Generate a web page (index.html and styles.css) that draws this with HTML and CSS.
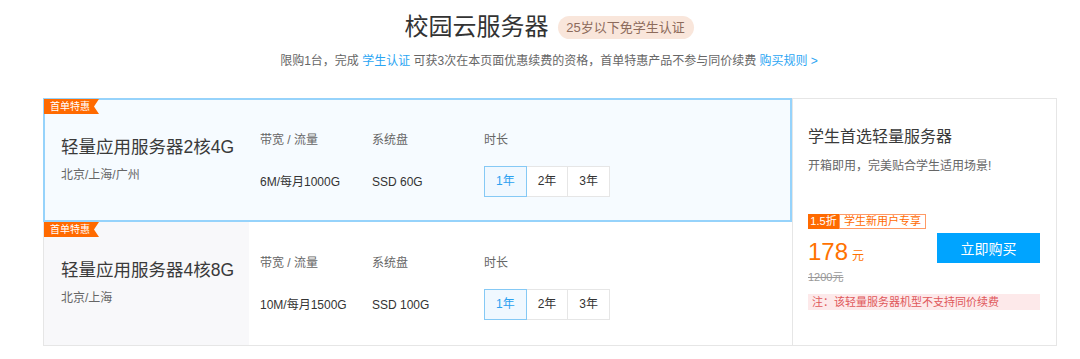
FILE: index.html
```html
<!DOCTYPE html>
<html lang="zh-CN">
<head>
    <meta charset="UTF-8">
    <title>校园云服务器</title>
    <link rel="stylesheet" href="styles.css">
</head>
<body>
    <div class="head">
        <div class="head-title">
            <h1>校园云服务器</h1>
            <span class="age-badge">25岁以下免学生认证</span>
        </div>
        <p class="head-desc">限购1台，完成 <a href="#">学生认证</a> 可获3次在本页面优惠续费的资格，首单特惠产品不参与同价续费 <a href="#">购买规则 &gt;</a></p>
    </div>

    <div class="plans">
        <div class="plan-list">
            <!-- 套餐 1 -->
            <div class="plan active">
                <span class="plan-tag">首单特惠</span>
                <div class="plan-side">
                    <div class="plan-name">轻量应用服务器2核4G</div>
                    <div class="plan-region">北京/上海/广州</div>
                </div>
                <div class="spec">
                    <div class="spec-label">带宽 / 流量</div>
                    <div class="spec-value">6M/每月1000G</div>
                </div>
                <div class="spec">
                    <div class="spec-label">系统盘</div>
                    <div class="spec-value">SSD 60G</div>
                </div>
                <div class="spec">
                    <div class="spec-label">时长</div>
                    <div class="years">
                        <span class="year on">1年</span><span class="year">2年</span><span class="year">3年</span>
                    </div>
                </div>
            </div>
            <!-- 套餐 2 -->
            <div class="plan">
                <span class="plan-tag">首单特惠</span>
                <div class="plan-side">
                    <div class="plan-name">轻量应用服务器4核8G</div>
                    <div class="plan-region">北京/上海</div>
                </div>
                <div class="spec">
                    <div class="spec-label">带宽 / 流量</div>
                    <div class="spec-value">10M/每月1500G</div>
                </div>
                <div class="spec">
                    <div class="spec-label">系统盘</div>
                    <div class="spec-value">SSD 100G</div>
                </div>
                <div class="spec">
                    <div class="spec-label">时长</div>
                    <div class="years">
                        <span class="year on">1年</span><span class="year">2年</span><span class="year">3年</span>
                    </div>
                </div>
            </div>
        </div>

        <div class="aside">
            <div class="aside-title">学生首选轻量服务器</div>
            <div class="aside-desc">开箱即用，完美贴合学生适用场景!</div>
            <div class="discount">
                <span class="discount-rate">1.5折</span><span class="discount-text">学生新用户专享</span>
            </div>
            <div class="buy-row">
                <div class="price-box">
                    <div class="price">178<span class="unit">元</span></div>
                    <div class="old-price">1200元</div>
                </div>
                <button class="buy-btn">立即购买</button>
            </div>
            <div class="note">注：该轻量服务器机型不支持同价续费</div>
        </div>
    </div>
</body>
</html>
```

FILE: styles.css
```css
body {
    margin: 0;
    font-family: "Liberation Sans", "Noto Sans CJK SC", sans-serif;
    color: #333;
    background: #fff;
}
.head {
    padding: 12px 0 0 18px;
    text-align: center;
}
.head-title {
    display: flex;
    justify-content: center;
    align-items: center;
    gap: 9px;
    height: 30px;
}
h1 {
    margin: 0;
    font-size: 24px;
    font-weight: normal;
    line-height: 30px;
    color: #333;
}
.age-badge {
    display: inline-block;
    width: 136px;
    height: 23px;
    line-height: 23px;
    border-radius: 12px;
    background: #f9e6db;
    color: #8d6b5b;
    font-size: 13px;
}
.head-desc {
    margin: 11px 0 0;
    font-size: 12px;
    line-height: 16px;
    color: #666;
}
.head-desc a {
    color: #2ba5f3;
    text-decoration: none;
}

.plans {
    display: flex;
    width: 1014px;
    margin: 29px 0 0 43px;
}
.plan-list {
    width: 749px;
}
.plan {
    position: relative;
    display: flex;
    height: 124px;
    box-sizing: border-box;
    border: 1px solid #e6e6e6;
    border-top: none;
    border-right: none;
    background: #fff;
}
.plan.active {
    border: 2px solid #96d3fb;
    background: #f6fbff;
}
.plan-tag {
    position: absolute;
    top: 0;
    left: 0;
    width: 55px;
    height: 15px;
    line-height: 15px;
    padding-left: 6px;
    box-sizing: border-box;
    background: #ff6a00;
    color: #fff;
    font-size: 10px;
    clip-path: polygon(0 0, 100% 0, calc(100% - 5px) 50%, 100% 100%, 0 100%);
}
.plan.active .plan-tag {
    top: -1px;
    left: -1px;
}
.plan-side {
    width: 205px;
    padding: 36px 0 0 17px;
    box-sizing: border-box;
    background: #f8f8fa;
}
.plan.active .plan-side {
    width: 204px;
    padding-top: 35px;
    padding-left: 16px;
    background: transparent;
}
.plan-name {
    font-size: 17.5px;
    line-height: 24px;
    color: #3a3a3a;
}
.plan-region {
    margin-top: 8px;
    font-size: 12px;
    line-height: 16px;
    color: #666;
}
.spec {
    width: 112px;
    padding-top: 33px;
    box-sizing: border-box;
    font-size: 12px;
}
.plan-side + .spec {
    margin-left: 11px;
}
.plan.active .spec {
    padding-top: 32px;
}
.spec-label {
    line-height: 16px;
    color: #666;
}
.spec-value {
    margin-top: 26px;
    line-height: 16px;
    color: #333;
}
.years {
    display: flex;
    margin-top: 18px;
    width: 126px;
}
.year {
    flex: 1;
    height: 31px;
    line-height: 29px;
    box-sizing: border-box;
    border: 1px solid #e6e6e6;
    margin-left: -1px;
    text-align: center;
    font-size: 12px;
    color: #333;
    background: #fff;
}
.year:first-child {
    margin-left: 0;
}
.year.on {
    position: relative;
    border-color: #85c9f5;
    background: #f0f8ff;
    color: #2ba1f0;
}

.aside {
    flex: 1;
    height: 248px;
    box-sizing: border-box;
    padding: 27px 16px 0 15px;
    border: 1px solid #e6e6e6;
}
.aside-title {
    font-size: 16px;
    line-height: 22px;
    color: #3a3a3a;
}
.aside-desc {
    margin-top: 9px;
    font-size: 12px;
    line-height: 18px;
    color: #666;
}
.discount {
    display: flex;
    margin-top: 39px;
    height: 15px;
    font-size: 11px;
    line-height: 13px;
}
.discount-rate {
    width: 31px;
    box-sizing: border-box;
    padding-top: 1px;
    background: #ff6a00;
    color: #fff;
    text-align: center;
}
.discount-text {
    width: 87px;
    box-sizing: border-box;
    border: 1px solid #ff9a66;
    color: #ff6a00;
    text-align: center;
}
.buy-row {
    display: flex;
    justify-content: space-between;
    margin-top: 4px;
}
.price-box {
    padding-top: 6px;
}
.price {
    font-size: 24px;
    line-height: 26px;
    color: #ff7200;
}
.unit {
    margin-left: 4px;
    font-size: 12px;
}
.old-price {
    margin-top: 1px;
    font-size: 11px;
    line-height: 14px;
    color: #999;
    text-decoration: line-through;
}
.buy-btn {
    width: 103px;
    height: 30px;
    border: none;
    background: #00a4ff;
    color: #fff;
    font-family: "Liberation Sans", "Noto Sans CJK SC", sans-serif;
    font-size: 14px;
    cursor: pointer;
}
.note {
    margin-top: 10px;
    height: 16px;
    line-height: 16px;
    padding-left: 4px;
    background: #fde9ea;
    color: #e0585b;
    font-size: 11px;
}
```
